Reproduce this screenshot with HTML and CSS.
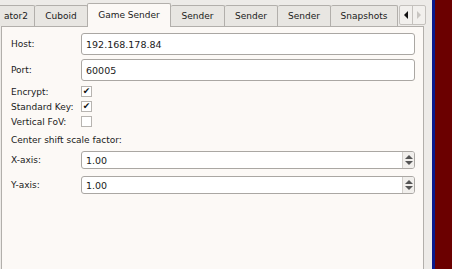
FILE: index.html
```html
<!DOCTYPE html>
<html lang="en">
<head>
    <meta charset="UTF-8">
    <title>Game Sender</title>
    <link rel="stylesheet" href="styles.css">
</head>
<body>
<div class="window">
    <div class="main">
        <div class="tabbar">
            <div class="tab first">ator2</div>
            <div class="tab w53">Cuboid</div>
            <div class="tab active">Game Sender</div>
            <div class="tab w54">Sender</div>
            <div class="tab w53">Sender</div>
            <div class="tab w53">Sender</div>
            <div class="tab w67">Snapshots</div>
            <div class="scroller">
                <span class="arrow left"></span>
                <span class="arrow right"></span>
            </div>
        </div>

        <div class="panel">
            <div class="row field-row">
                <label>Host:</label>
                <div class="edit">192.168.178.84</div>
            </div>
            <div class="row field-row">
                <label>Port:</label>
                <div class="edit">60005</div>
            </div>
            <div class="row check-row">
                <label>Encrypt:</label>
                <span class="check checked">&#10004;</span>
            </div>
            <div class="row check-row">
                <label>Standard Key:</label>
                <span class="check checked">&#10004;</span>
            </div>
            <div class="row check-row">
                <label>Vertical FoV:</label>
                <span class="check"></span>
            </div>
            <div class="heading">Center shift scale factor:</div>
            <div class="row spin-row">
                <label>X-axis:</label>
                <div class="spin">
                    <span class="value">1.00</span>
                    <span class="buttons"><i class="up"></i><i class="down"></i></span>
                </div>
            </div>
            <div class="row spin-row">
                <label>Y-axis:</label>
                <div class="spin">
                    <span class="value">1.00</span>
                    <span class="buttons"><i class="up"></i><i class="down"></i></span>
                </div>
            </div>
        </div>
    </div>
    <div class="edge-blue"></div>
    <div class="edge-red"></div>
</div>
</body>
</html>
```

FILE: styles.css
```css
body {
    margin: 0;
    padding: 0;
    font-family: 'DejaVu Sans', sans-serif;
    font-size: 9px;
    color: #1a1a1a;
    background-color: #edebe8;
    overflow: hidden;
}

.window {
    display: flex;
    height: 269px;
}

.main {
    width: 432px;
    display: flex;
    flex-direction: column;
}

.edge-blue {
    width: 3px;
    background-color: #0a1a8c;
}

.edge-red {
    flex-grow: 1;
    background-color: #6b0000;
}

/* tabs */
.tabbar {
    display: flex;
    align-items: flex-end;
    height: 26px;
    position: relative;
    z-index: 2;
}

.tab {
    height: 21px;
    box-sizing: border-box;
    display: flex;
    align-items: center;
    justify-content: center;
    flex-shrink: 0;
    background-color: #e8e6e2;
    border: 1px solid #b2afab;
    border-bottom: none;
    border-left: none;
    border-radius: 2px 2px 0 0;
    white-space: nowrap;
}

.tab.first {
    width: 35px;
    justify-content: flex-end;
    padding-right: 6px;
    overflow: hidden;
    border-radius: 0 2px 0 0;
}

.tab.w53 {
    width: 53px;
}

.tab.w54 {
    width: 54px;
}

.tab.w67 {
    width: 67px;
}

.tab.active {
    width: 84px;
    height: 24px;
    margin-left: -1px;
    margin-bottom: -1px;
    padding-bottom: 1px;
    background-color: #fcf9f6;
    border-left: 1px solid #b2afab;
}

.scroller {
    display: flex;
    margin-left: 1px;
    margin-bottom: 1px;
    height: 20px;
    border: 1px solid #c4c1bd;
    border-radius: 2px;
    box-sizing: border-box;
    background-color: #f2f0ed;
}

.arrow {
    width: 12px;
    display: flex;
    align-items: center;
    justify-content: center;
}

.arrow.left {
    border-right: 1px solid #c4c1bd;
}

.arrow.left::before {
    content: '';
    border-top: 4px solid transparent;
    border-bottom: 4px solid transparent;
    border-right: 4px solid #111;
}

.arrow.right::before {
    content: '';
    border-top: 4px solid transparent;
    border-bottom: 4px solid transparent;
    border-left: 4px solid #c8c5c1;
}

/* panel */
.panel {
    flex-grow: 1;
    margin-left: 1px;
    width: 423px;
    box-sizing: border-box;
    background-color: #fcf9f6;
    border: 1px solid #b2afab;
    border-bottom: none;
    padding: 6px 8px 0 9px;
    display: flex;
    flex-direction: column;
}

.row {
    display: flex;
    align-items: center;
}

.row label {
    width: 70px;
    flex-shrink: 0;
}

.field-row {
    height: 22px;
    margin-bottom: 4px;
}

.field-row + .field-row {
    margin-bottom: 3px;
}

.edit {
    flex-grow: 1;
    height: 22px;
    box-sizing: border-box;
    background-color: #fff;
    border: 1px solid #aaa7a3;
    border-radius: 3px;
    padding-left: 4px;
    display: flex;
    align-items: center;
    font-size: 9.5px;
}

.check-row {
    height: 15px;
}

.check {
    width: 11px;
    height: 11px;
    box-sizing: border-box;
    border: 1px solid #b7b4b0;
    background-color: #fff;
    font-size: 9px;
    line-height: 9px;
    text-align: center;
    color: #111;
}

.heading {
    margin-top: 4px;
    height: 14px;
    display: flex;
    align-items: center;
}

.spin-row {
    height: 18px;
    margin-top: 4px;
}

.spin-row + .spin-row {
    margin-top: 7px;
}

.spin {
    flex-grow: 1;
    height: 18px;
    box-sizing: border-box;
    background-color: #fff;
    border: 1px solid #aaa7a3;
    border-radius: 3px;
    display: flex;
    font-size: 9.5px;
}

.spin .value {
    flex-grow: 1;
    padding-left: 4px;
    display: flex;
    align-items: center;
}

.spin .buttons {
    width: 11px;
    border-left: 1px solid #d2cfcb;
    background-color: #f1efec;
    display: flex;
    flex-direction: column;
    align-items: center;
    justify-content: center;
    gap: 2px;
    border-radius: 0 2px 2px 0;
}

.spin .up {
    border-left: 4px solid transparent;
    border-right: 4px solid transparent;
    border-bottom: 4px solid #555;
}

.spin .down {
    border-left: 4px solid transparent;
    border-right: 4px solid transparent;
    border-top: 4px solid #555;
}
```
